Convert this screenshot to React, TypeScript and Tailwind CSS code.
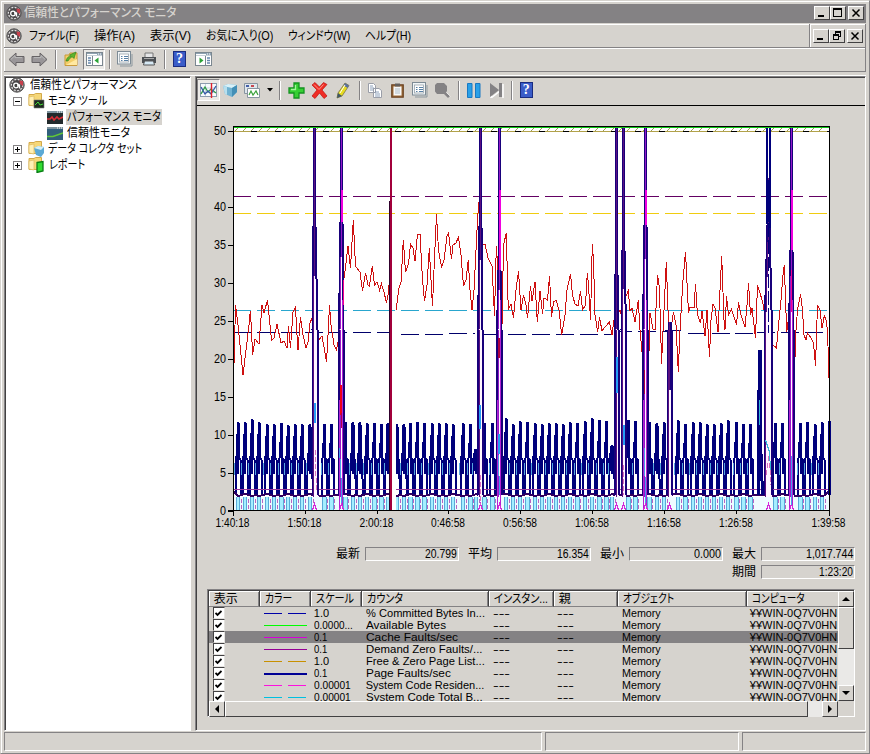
import React, { useLayoutEffect, useRef, useState } from 'react';

const FONT = "font-['Liberation_Sans','Noto_Sans_CJK_JP',sans-serif]";

type FitProps = { w: number; children: string; className?: string };

// Condenses a label to a given width
const Fit: React.FC<FitProps> = ({ w, children, className = '' }) => {
  const ref = useRef<HTMLSpanElement>(null);
  const [scale, setScale] = useState(1);

  useLayoutEffect(() => {
    if (ref.current) setScale(w / ref.current.offsetWidth);
  }, [w, children]);

  return (
    <span className={`block shrink-0 whitespace-pre ${className}`} style={{ width: w }}>
      <span
        ref={ref}
        className="inline-block origin-left [font-feature-settings:'palt']"
        style={{ transform: `scaleX(${scale})` }}
      >
        {children}
      </span>
    </span>
  );
};

const Gauge: React.FC = () => (
  <svg width="16" height="16" viewBox="0 0 16 16" className="shrink-0">
    <circle cx="8" cy="8" r="7.2" fill="#6b6769" stroke="#555" />
    <circle cx="8" cy="8" r="5.6" fill="#4a4749" stroke="#e4e4e4" strokeWidth="1.2" strokeDasharray="1.8 1.5" />
    <path d="M10.500 3.500l3.500.5v5l-3-2z" fill="#c8404c" />
    <circle cx="7" cy="8.500" r="2.300" fill="#444" stroke="#fff" strokeWidth="1.3" />
    <path d="M8 8h2.500v3.500" fill="none" stroke="#fff" strokeWidth="1.3" />
  </svg>
);

const Sep: React.FC = () => (
  <div className="h-[19px] w-[2px] shrink-0 border-l border-[#848284] bg-white" />
);

const Help: React.FC = () => (
  <div className="flex h-4 w-[13px] shrink-0 items-center justify-center border border-[#1a2c80] bg-[#3a5cc8] font-['Liberation_Serif',serif] text-[14px] font-bold leading-none text-white">
    ?
  </div>
);

const Arrow: React.FC<{ flip?: boolean }> = ({ flip }) => (
  <svg width="17" height="15" viewBox="0 0 17 15" className={flip ? '-scale-x-100' : ''}>
    <path d="M1 7.500L8 1v3.500h8v6H8V14z" fill="#999698" stroke="#666365" />
    <path d="M3 7.300l4-3.700v2h7" fill="none" stroke="#bbb" />
  </svg>
);

// Console window with its side pane on the left or on the right
const PanelIcon: React.FC<{ left?: boolean }> = ({ left }) => (
  <svg width="17" height="14" viewBox="0 0 17 14">
    <rect x=".5" y=".5" width="16" height="13" fill="#fff" stroke="#7b8790" />
    <rect x="1" y="1" width="15" height="2.5" fill="#8ea2b2" />
    <path d="M1 2.500h10M12 2h1M14 2h1" stroke="#fff" />
    <path d={left ? 'M6.500 4v9' : 'M10.500 4v9'} stroke="#7b8790" />
    <path d={left ? 'M2 6h3M2 8.500h3M2 11h3' : 'M12 6h3M12 8.500h3M12 11h3'} stroke="#6687ac" strokeWidth="1.3" />
    <path d={left ? 'M12.500 5.500v6L8.500 8.500z' : 'M4.500 5.500v6L8.500 8.500z'} fill="#2aa336" />
  </svg>
);

const PropsIcon: React.FC = () => (
  <svg width="16" height="16" viewBox="0 0 16 16">
    <rect x=".5" y=".5" width="13" height="12.500" fill="#f1f5f7" stroke="#7d8b95" />
    <path d="M3 15h12V3" fill="none" stroke="#8b979e" />
    <rect x="2.500" y="3" width="9" height="8" fill="#fff" stroke="#98a4ab" strokeWidth=".8" />
    <path d="M4 5.500h1.500M7 5.500h4M4 7.500h1.500M7 7.500h4M4 9.500h1.500M7 9.500h4" stroke="#5780a5" />
  </svg>
);

const Cube: React.FC = () => (
  <svg width="16" height="16" viewBox="0 0 16 16">
    <path d="M1 4l5-2 9 1v7l-5 5-7-3z" fill="#6fb2d2" />
    <path d="M1 4l5-2 9 1-5 3z" fill="#d9f1f8" />
    <path d="M10 6l5-3v7l-5 5z" fill="#438fb6" />
    <path d="M1 4l4 .8V13l-2-1z" fill="#b7dfee" />
  </svg>
);

const Toolbar: React.FC = () => (
  <div className="flex h-6 items-center border-b border-[#848284] pb-[1px]">
    <div className="ml-1 flex w-[40px] items-center justify-between">
      <Arrow />
      <Arrow flip />
    </div>
    <div className="ml-[7px] mr-[7px]"><Sep /></div>
    <svg width="15" height="16" viewBox="0 0 15 16">
      <path d="M1 4h4l1-2h7v12.500H1z" fill="#f4ce68" stroke="#c99a3b" />
      <path d="M2 14h11V8z" fill="#ffe9a2" />
      <path d="M2 10c1-4 3-5 5-4.500L5.500 4 12 1l-2 6.500-1.500-1.500c-2 0-3 2-4.500 4z" fill="#5fb52c" stroke="#237d1c" strokeWidth=".6" />
    </svg>
    <div className="ml-[4px] flex h-[21px] w-[22px] items-center justify-center border border-b-white border-l-[#848284] border-r-white border-t-[#848284] bg-[#ebe9e6]">
      <PanelIcon left />
    </div>
    <div className="ml-[4px] mr-[6px]"><Sep /></div>
    <PropsIcon />
    <svg width="16" height="14" viewBox="0 0 16 14" className="ml-[8px]">
      <path d="M4 1h8v5H4z" fill="#e5e6e7" stroke="#777" />
      <path d="M1 5h14v6H1z" fill="#4c5054" />
      <path d="M3 6.500h10" stroke="#aaa" />
      <path d="M3.500 9h9l1 4h-11z" fill="#d6e9f4" stroke="#555" />
    </svg>
    <div className="ml-[7px] mr-[7px]"><Sep /></div>
    <Help />
    <div className="ml-[9px]"><PanelIcon /></div>
  </div>
);

const MonitorToolbar: React.FC = () => (
  <div className="flex h-[28px] items-center border-b border-black pb-[3px]">
    <div className="flex h-[22px] w-[23px] items-center justify-center border border-b-white border-l-[#848284] border-r-white border-t-[#848284] bg-[#eceae7]">
      <svg width="17" height="15" viewBox="0 0 17 15">
        <rect x=".5" y=".5" width="16" height="13" fill="#f7fbfd" stroke="#8c9cae" />
        <path d="M1 5h15M1 9.500h15M5.500 1v12" stroke="#b7c4d3" strokeWidth=".7" />
        <path d="M1 11l4-7 3 5 3-3 5 4" fill="none" stroke="#2f9c46" strokeWidth="1.3" />
        <path d="M1 4l4 7 3-3 3 3 5-8" fill="none" stroke="#3558a8" strokeWidth="1.3" />
        <path d="M11.500 0v15" stroke="#e0202c" strokeWidth="1.4" />
      </svg>
    </div>
    <div className="ml-[2px]"><Cube /></div>
    <svg width="17" height="15" viewBox="0 0 17 15" className="ml-[6px]">
      <path d="M.5.5h13v10H.5z" fill="#dfe6ec" stroke="#8794a0" />
      <path d="M2 3h3" stroke="#4560a8" strokeWidth="2" />
      <path d="M7 3h3" stroke="#c84850" strokeWidth="2" />
      <path d="M3.500 5.500h12v9h-12z" fill="#fff" stroke="#8794a0" />
      <path d="M5 12l2-4 2 4 3-4 2 4" fill="none" stroke="#3aa13b" strokeWidth="1.2" />
    </svg>
    <svg width="6" height="4" viewBox="0 0 6 4" className="ml-[6px] mr-[6px]"><path d="M0 0h6L3 3.500z" /></svg>
    <div className="mr-[7px]"><Sep /></div>
    <svg width="17" height="17" viewBox="0 0 17 17">
      <path d="M6 1h5v5h5v5h-5v5H6v-5H1V6h5z" fill="#35d033" stroke="#149321" strokeWidth="1.300" />
      <path d="M7.500 3v4.500H3" fill="none" stroke="#a3f59c" strokeWidth="1.300" />
    </svg>
    <svg width="17" height="17" viewBox="0 0 17 17" className="ml-[6px]">
      <path d="M1 3l3-2.500L8.500 5l4-4.500L16 2.500 11 8l5 6-3 2.500L8.500 11 4 16.500 1 14l5-6z" fill="#f02d25" stroke="#ba1512" strokeWidth=".7" />
      <path d="M3 2.500l5 5 4.500-5" stroke="#ff958a" fill="none" />
    </svg>
    <svg width="14" height="17" viewBox="0 0 14 17" className="ml-[8px]">
      <path d="M1 16l1-5 7-10 4 2.500L6 14z" fill="#e8dc20" stroke="#7a7540" strokeWidth=".8" />
      <path d="M9 1l4 2.500-1.500 2.500-4-2.500z" fill="#5a6f9c" />
      <path d="M1 16l1-5 4 3z" fill="#3f5668" />
      <path d="M4 11l5-8" stroke="#fff" />
    </svg>
    <div className="ml-[9px] mr-[7px]"><Sep /></div>
    <svg width="14" height="15" viewBox="0 0 14 15">
      <path d="M.5.5h5l2 2v7h-7zM5.500 5.500h5.500l2.500 2v7h-8z" fill="#fff" stroke="#9a9ea8" />
      <path d="M2 3h3M2 5h4M2 7h3M7 9h4M7 11h5M7 13h5" stroke="#7088a8" strokeWidth=".8" />
    </svg>
    <svg width="13" height="15" viewBox="0 0 13 15" className="ml-[9px]">
      <path d="M.8 1.800h11.400v12.400H.8z" fill="#a2713d" stroke="#6b4322" strokeWidth="1.300" />
      <path d="M2.500 3.500h8v9h-8z" fill="#f6f7f8" />
      <path d="M4 .5h5v3H4z" fill="#625e5c" />
      <path d="M4 6h5M4 8h5M4 10h5" stroke="#aebdc6" />
    </svg>
    <div className="ml-[8px]"><PropsIcon /></div>
    <svg width="17" height="16" viewBox="0 0 17 16" className="ml-[6px]">
      <path d="M3 1h7l3 3v5l-1 1.500 4 3.500-2 2-4-4H3L1 9.500V3z" fill="#848284" />
      <path d="M12.500 10.500l4 4" stroke="#fff" strokeWidth=".6" />
    </svg>
    <div className="ml-[7px] mr-[6px]"><Sep /></div>
    <svg width="15" height="15" viewBox="0 0 15 15">
      <path d="M1.500.5H6v14H1.500zM9.500.5H14v14H9.500z" fill="#28a0e8" stroke="#1878c2" />
    </svg>
    <svg width="15" height="15" viewBox="0 0 15 15" className="ml-[8px]">
      <path d="M2 1v14l9-7M14 1v14" stroke="#fff" strokeWidth="1.500" fill="none" />
      <path d="M1 0v14l9-7zM10 0h3v14h-3z" fill="#848284" />
    </svg>
    <div className="ml-[7px] mr-[7px]"><Sep /></div>
    <Help />
  </div>
);

const WinButton: React.FC<{ kind: 'min' | 'max' | 'restore' | 'close' }> = ({ kind }) => (
  <div className="flex h-[14px] w-4 items-center justify-center border border-b-[#424142] border-l-white border-r-[#424142] border-t-white bg-[#d6d3ce]">
    <svg width="12" height="10" viewBox="0 0 12 10" fill="none" stroke="#000" shapeRendering="crispEdges">
      {kind === 'min' && <path d="M2 8h6" strokeWidth="2" />}
      {kind === 'max' && <path d="M1.500 1v7.500h8V1M1 1h9" strokeWidth="1.500" />}
      {kind === 'restore' && (
        <path d="M4 1h6M4.500 1v3M9.500 1v5M7 5.500h3M2 4h6M2.500 4v4.500h5V4" strokeWidth="1.300" />
      )}
      {kind === 'close' && <path d="M2.500 1.500l7 7M9.500 1.500l-7 7" strokeWidth="1.500" shapeRendering="auto" />}
    </svg>
  </div>
);

const Folder: React.FC<{ kind: 'tools' | 'sets' | 'reports' }> = ({ kind }) => (
  <svg width="17" height="16" viewBox="0 0 17 16">
    <path d="M1 1.500h5l1.500-1h6v12H1z" fill="#f5d778" stroke="#d3a94a" />
    <path d="M1 4l5-1v10l-5-1z" fill="#fff0b5" stroke="#dcb95f" strokeWidth=".7" />
    {kind === 'tools' && (
      <>
        <path d="M6 7h10v8H6z" fill="#1e2b20" stroke="#777" strokeWidth=".6" />
        <path d="M7 12l3-3 2 3 3-1" stroke="#48d838" fill="none" />
      </>
    )}
    {kind === 'sets' && (
      <>
        <path d="M6 7l4-2 6 1v6l-3 4-5-2z" fill="#5aa9d5" />
        <path d="M6 7l4-2 6 1-3 3z" fill="#d4eff8" />
      </>
    )}
    {kind === 'reports' && (
      <path d="M9 5.500l6-1v9.500l-6 1.500z" fill="#32dc32" stroke="#087d13" strokeWidth="1.300" />
    )}
  </svg>
);

const Monitor: React.FC<{ green?: boolean }> = ({ green }) => (
  <svg width="16" height="13" viewBox="0 0 16 13">
    <path d="M0 0h16v13H0z" fill={green ? '#315f7c' : '#222a2c'} />
    <path d="M0 0h16v2H0z" fill="#7d929c" />
    <path d="M10 1h1M12 1h1M14 1h1" stroke="#fff" />
    {green ? (
      <path d="M0 9.500h6l10-3.500" stroke="#61c837" strokeWidth="1.500" fill="none" />
    ) : (
      <path d="M0 8h3l2-2 2 3 3-3 2 2 4-2" stroke="#d92c34" strokeWidth="1.600" fill="none" />
    )}
  </svg>
);

const Toggle: React.FC<{ open?: boolean }> = ({ open }) => (
  <svg width="9" height="9" viewBox="0 0 9 9" shapeRendering="crispEdges">
    <path d="M.5.5h8v8h-8z" fill="#fff" stroke="#848284" />
    <path d={open ? 'M2 4.500h5' : 'M2 4.500h5M4.500 2v5'} stroke="#000" />
  </svg>
);

const Tree: React.FC = () => (
  <div className="w-[187px] border border-b-white border-l-[#848284] border-r-white border-t-[#848284]">
    <div className="h-full border-l border-t border-[#424142] bg-white pl-[3px] text-[12px] leading-4">
      <div className="-mt-[1px] flex h-4 items-center gap-[5px]">
        <Gauge />
        <Fit w={107}>信頼性とパフォーマンス</Fit>
      </div>
      <div className="flex h-4 items-center pl-1">
        <Toggle open />
        <span className="ml-[6px] mr-[3px]"><Folder kind="tools" /></span>
        <Fit w={59}>モニタ ツール</Fit>
      </div>
      <div className="flex h-4 items-center pl-[38px]">
        <Monitor />
        <div className="ml-[3px] bg-[#d6d3ce] pl-[1px] pr-[1px]"><Fit w={94}>パフォーマンス モニタ</Fit></div>
      </div>
      <div className="flex h-4 items-center pl-[38px]">
        <Monitor green />
        <Fit w={63} className="ml-[4px]">信頼性モニタ</Fit>
      </div>
      <div className="flex h-4 items-center pl-1">
        <Toggle />
        <span className="ml-[6px] mr-[3px]"><Folder kind="sets" /></span>
        <Fit w={94}>データ コレクタ セット</Fit>
      </div>
      <div className="flex h-4 items-center pl-1">
        <Toggle />
        <span className="ml-[6px] mr-[4px]"><Folder kind="reports" /></span>
        <Fit w={36}>レポート</Fit>
      </div>
    </div>
  </div>
);

const beforeGap =
  '233,385 234,364 235.5,305 238,325 240,345 243,375 246,350 249,325 250.3,311 251.5,330 252.6,355 255,339 259,344 262,305 264,313 267.5,300 270,325 271.5,340 274,338 277,324 281,343 284,341 287,348 288.5,326 290.5,348 293,312 295.5,307 297,335 298,350 300.5,317 303,335 306,348 308,342 310,323 312,318 315,335 318,344 319,340 322,336 324.500,350 326.500,362 328,335 329.5,305 331,325 334,345 336.500,350 338,342 340,385 341,395 342,330 343.300,284 346,263 348,246 350.500,268 353.300,220 355.500,266 360,272 362.500,291 365.500,273 368,285 369.500,286 372.300,266 374.500,285 377,282 379.500,290 381.500,284 384,292 386.500,303 388,295 390,276';

const afterGap =
  '396,310 399,288 401,282 403.3,240 405.5,272 408.5,264 410.5,244 413,248 415,261 417.5,234 420,234 422.5,280 424.5,301 427,285 429.3,248 431,280 432.5,306 434,270 436.5,214 438.5,250 441.5,267 444,260 447,236 448.5,233 451.5,259 453,245 456,243 458.5,237 461,255 463.5,286 466,280 468.3,260 470,290 472,310 474,290 477,230 478.7,202 480.5,240 483,244 485,244 488,258 492,266 494.5,316 496.3,246 498,270 502,325 503.5,245 506.3,233 508,300 508.5,309 511,304 513.5,318 516,290 518.5,271 521,310 523.5,295 526,305 527.5,318 530.5,286 532,301 535,282 537.3,322 540,291 542.5,314 544,298 547.5,300 549.5,276 551.5,317 553.5,302 556,300 559,310 561.7,335 565,315 567,290 570.5,274 572.5,295 575,304 578,306 580.5,291 582.5,310 585.5,305 587.3,273 588.5,285 590.5,320 592.3,244 593.5,260 595,315 597.7,332 599.5,317 602,331 605,327 609.5,322 612,335 614,320 620,310 622,318 624,312 625.5,297 628.3,291 630,311 632,308 635,322 638.3,300 640,330 641.5,346 643.5,370 645,395 648,390 650,313 653,329 655,330 657.5,275 659,285 660.5,320 661.5,364 664,310 666.3,262 668,310 670,335 673.5,312 676,325 678.3,372 680,330 683,280 685.5,252 688.5,313 690,307 694,308 695.5,284 697.5,315 700.5,323 702,311 705,336 707,310 709.5,357 711,320 713,304 715,308 718,332 719.5,300 721.7,256 724,320 725,330 726.5,296 728.5,315 731.5,309 736.5,325 738.5,302 741,315 745,327 747,305 748.5,283 750.5,315 752,308 755.5,338 757.5,285 762.7,302 764,310 767,330 770,310 773,345 776.5,348 779,320 781,300 783,275 784.3,265 786.7,332 788.5,318 790,300 793,310 794.3,377 796,330 797.5,310 800.5,294 802.5,310 804,335 806,340 807.5,333 811,338 813.5,343 815.5,366 817.5,305 820,310 822,328 824.5,315 826,320 827.500,330 829,378';

// x position and top of each short page-fault burst
const bursts: [number, number][] = [
  [238.3, 423], [245.3, 423], [252.3, 420], [259.3, 423], [267.3, 425], [274.3, 425], [281.5, 424],
  [288.3, 426], [295.3, 425], [302.3, 425], [310, 425], [324.5, 425], [331.5, 425], [345.5, 423],
  [353, 423], [360, 423], [367.3, 424], [374.5, 424], [381.5, 425], [388, 424], [397, 425],
  [404, 425], [410.5, 424], [417.5, 423], [424.5, 424], [432.3, 424], [439.3, 424], [446.3, 424],
  [453.3, 425], [463.3, 424], [470.5, 425], [476, 450], [484.5, 424], [492.5, 424], [506.3, 419], [513.3, 425],
  [520.3, 422], [527.5, 423], [535.3, 424], [542.3, 425], [549.3, 424], [556.3, 424], [563.3, 425],
  [570.3, 423], [577.5, 424], [585.3, 422], [592.3, 419], [599.5, 421], [606.5, 422], [612, 446], [628.5, 421],
  [635.5, 422], [649.5, 423], [657, 424], [664.3, 423], [678.3, 421], [685.5, 425], [693.3, 423],
  [700.3, 423], [707.3, 425], [714.3, 425], [721.3, 424], [728.3, 421], [736.5, 423], [743.5, 425],
  [750.5, 425], [775.5, 424], [782.5, 424], [800.5, 424], [807.5, 423], [815.3, 425], [822.3, 423],
];

// [left foot, centre, right foot, y where the sides widen, top, magenta]
const spikes: [number, number, number, number, number, boolean][] = [
  [312.5, 314.5, 317.5, 226, 128, false],
  [339, 341.5, 343.5, 222, 128, true],
  [478, 480.5, 482.5, 226, 128, false],
  [497, 499.5, 501.5, 270, 128, true],
  [615, 616.5, 618.5, 274, 128, false],
  [621.5, 623.5, 626, 250, 128, false],
  [643, 645.5, 647.5, 225, 128, true],
  [667.5, 669.5, 671.5, 390, 322, false],
  [764.5, 768.5, 772, 225, 128, false],
  [789, 791.5, 793.5, 250, 128, true],
];

const yTicks = [50, 45, 40, 35, 30, 25, 20, 15, 10, 5, 0];
const xTicks: [number, string][] = [
  [233, '1:40:18'], [305, '1:50:18'], [377, '2:00:18'], [448.5, '0:46:58'], [520.5, '0:56:58'],
  [592.5, '1:06:58'], [664.5, '1:16:58'], [736.5, '1:26:58'], [829, '1:39:58'],
];

const Chart: React.FC = () => (
  <svg width="656" height="427" viewBox="208 106 656 427" fill="none" className="ml-[11px] block shrink-0">
    <g shapeRendering="crispEdges">
      <path d="M233 126h597v384H233z" fill="#fff" />
      <path d="M233 131.500h597" stroke="#000" />
      <path d="M233 131.500h597" stroke="#b2a24a" strokeDasharray="18 6" />
      {Array.from({ length: 74 }, (_, i) => (
        <path key={i} d={`M${235 + i * 8} 131l4-4`} stroke="#9a9a5c" />
      ))}
      <path d="M234 497h595v13H234z" fill="#eefbff" />
      {bursts.map(([x]) => (
        <g key={x}>
          <path d={`M${x - 2} 497h4v13h-4z`} fill="#a5efff" />
          <path d={`M${x - 2} 510v-13M${x + 1.5} 497v13`} stroke="#5aaad8" />
          <path d={`M${x + 3} 499v11`} stroke="#b765c4" strokeDasharray="4 2" />
        </g>
      ))}
      {bursts.map(([x, y]) => (
        <g key={x}>
          <polyline
            points={`${x - 2.7},495 ${x - 2.4},462 ${x - 1.2},450 ${x - 0.5},${y} ${x + 0.5},${y} ${x + 1},458 ${x + 2.3},460 ${x + 2.7},495`}
            stroke="#00007b"
            strokeWidth="2"
            strokeLinejoin="bevel"
          />
          <path d={`M${x} ${y}V474`} stroke="#00007b" strokeWidth="2" />
          <path d={`M${x - 3.500} 463v12`} stroke="#55a6e0" />
        </g>
      ))}
      <path d="M233 489.500h596" stroke="#9d3c9c" />
      <polyline
        points={`234,492 ${bursts.map(([x], i) => `${x},${i % 3 === 1 ? 494 : 496} ${x + 3},495`).join(' ')} 829,491`}
        stroke="#31005f"
        strokeWidth="2"
      />
      <path d="M392 132h4v378h-4z" fill="#fff" />
      <path d="M233 196.500h596" stroke="#630063" strokeDasharray="18 6" />
      <path d="M233 213.500h596" stroke="#f0cc10" strokeDasharray="18 6" />
      <path d="M233 310.500h596" stroke="#29a6ce" strokeDasharray="18 6" />
      <path d="M233 332.500h158" stroke="#00006b" strokeDasharray="18 6" />
      <path d="M401 334.500h48M449 333.500h26M484 334.500h128" stroke="#00006b" strokeDasharray="18 6" />
      <path d="M614 331.500h56M665 330.500h16M688 333.500h43M735 333.500h18M757 332.500h72" stroke="#00006b" strokeDasharray="18 6" />
      <polyline points={beforeGap} stroke="#ce1010" />
      <polyline points={afterGap} stroke="#ce1010" />
      {spikes.map(([l, c, r, wide, top, magenta]) => (
        <g key={c}>
          <path d={`M${l} 497V330L${c - 1} ${wide}h2L${r} 330V497z`} fill="#fff6ff" />
          <path d={`M${l} 495V330L${c - 1} ${wide}V${top}M${r} 495V330L${c + 1} ${wide}V${top}`} stroke="#18007b" strokeWidth="2" />
          <path d={`M${l + 1} 497V330L${c} ${wide}V${top}`} stroke={magenta ? '#9418c8' : '#5b1080'} />
          {magenta && <path d={`M${c} 190V${wide}`} stroke="#f000df" strokeWidth="2" />}
          {magenta && <path d={`M${r - 1} 300V508M${l} 400V508`} stroke="#b321d2" />}
          <path d={`M${c - 2} 510l2-6 2 6`} stroke="#d528d8" />
        </g>
      ))}
      <path d="M314.500 403v20M616.500 357v36M623.500 425v20M480 405v24M498.500 434v20" stroke="#259df5" strokeWidth="2" />
      <path d="M340.500 385v30" stroke="#ef0018" strokeWidth="2" />
      <path d="M341.500 413v15" stroke="#b0004a" />
      <path d="M339.500 448l1.500 30 1 25M498.500 455l1 40M644.500 448l1 55M791 455l1 50" stroke="#489cea" />
      <path d="M315 450l1.500 40M480 475v30M623 465v30M766 475l3-20 2 30" stroke="#db70bd" strokeDasharray="5 2" />
      <path d="M343.500 280v25M791.500 270v42" stroke="#f60090" strokeWidth="1.500" />
      <path d="M499 338v20M644.500 370v24" stroke="#b00040" strokeWidth="1.500" />
      <path d="M758 495V430L760 350V425L762.500 495" stroke="#00007b" strokeWidth="3" />
      <path d="M759 400v25M765.500 440l4 12 1 18" stroke="#35b9d6" />
      <path d="M767 128v96M770 128v100" stroke="#00007b" strokeWidth="2" />
      <path d="M768.500 128v50" stroke="#fff" />
      <path d="M768.500 180v42" stroke="#00007b" strokeWidth="4" />
      <path d="M768.500 223v110" stroke="#00007b" strokeDasharray="14 3" />
      <path d="M829 421v74" stroke="#00007b" strokeWidth="3" />
      <path d="M389.500 510V275l1-143" stroke="#31002c" />
      <path d="M391 128v382" stroke="#a2003b" strokeWidth="2" />
      <path d="M233 126.500h597" stroke="#000" />
      <path d="M233 127.500h597" stroke="#10c818" />
      <path d="M233.500 126v390M829.500 126v390M228 510.500h602" stroke="#000" />
      {yTicks.map((v) => (
        <path key={v} d={`M228 ${511.5 - Math.round(v * 7.6)}h5`} stroke="#000" />
      ))}
      {xTicks.map(([x]) => (
        <path key={x} d={`M${Math.floor(x) + 0.5} 510v4`} stroke="#000" />
      ))}
    </g>
    <g fill="#000" fontSize="12">
      {yTicks.map((v) => (
        <text key={v} x="226" y={515 - v * 7.6} textAnchor="end" textLength={v > 5 ? 12 : 6} lengthAdjust="spacingAndGlyphs">
          {v}
        </text>
      ))}
      {xTicks.map(([x, label]) => (
        <text key={x} x={x - 17.5} y="527" textLength="34" lengthAdjust="spacingAndGlyphs">
          {label}
        </text>
      ))}
    </g>
  </svg>
);

type StatProps = { label: string; value: string; w: number; vw: number };

const Stat: React.FC<StatProps> = ({ label, value, w, vw }) => (
  <div className="flex h-[14px] items-center gap-[5px]">
    <Fit w={24}>{label}</Fit>
    <div
      className="flex h-[14px] items-center justify-end border border-b-white border-l-[#848284] border-r-white border-t-[#848284] pr-[1px]"
      style={{ width: w }}
    >
      <Fit w={vw}>{value}</Fit>
    </div>
  </div>
);

type Row = { color: string; dash?: boolean; thick?: boolean; scale: string; sw: number; name: string; nw: number };

const rows: Row[] = [
  { color: '#0000a8', dash: true, scale: '1.0', sw: 15, name: '% Committed Bytes In...', nw: 119 },
  { color: '#00ff00', scale: '0.0000...', sw: 39, name: 'Available Bytes', nw: 80 },
  { color: '#d800d8', scale: '0.1', sw: 13, name: 'Cache Faults/sec', nw: 92 },
  { color: '#940094', scale: '0.1', sw: 13, name: 'Demand Zero Faults/...', nw: 117 },
  { color: '#c89000', dash: true, scale: '1.0', sw: 15, name: 'Free & Zero Page List...', nw: 119 },
  { color: '#000094', thick: true, scale: '0.1', sw: 13, name: 'Page Faults/sec', nw: 85 },
  { color: '#ff10e0', dash: true, scale: '0.00001', sw: 37, name: 'System Code Residen...', nw: 119 },
  { color: '#00c0e0', dash: true, scale: '0.00001', sw: 37, name: 'System Code Total B...', nw: 117 },
];

const HeadCell: React.FC<{ label: string; w: number; cls: string }> = ({ label, w, cls }) => (
  <div className={`flex h-full shrink-0 items-center overflow-hidden border-b border-r border-b-[#848284] border-r-[#424142] pl-[5px] shadow-[inset_1px_1px_0_#fff,inset_-1px_0_0_#848284] ${cls}`}>
    <Fit w={w}>{label}</Fit>
  </div>
);

const ScrollButton: React.FC<{ d: string }> = ({ d }) => (
  <div className="flex h-4 w-4 shrink-0 items-center justify-center border border-b-[#424142] border-l-white border-r-[#424142] border-t-white bg-[#d6d3ce]">
    <svg width="8" height="8" viewBox="0 0 8 8"><path d={d} /></svg>
  </div>
);

const CounterTable: React.FC = () => (
  <div className="ml-[10px] mt-[10px] h-[128px] w-[648px] border border-b-white border-l-[#848284] border-r-white border-t-[#848284]">
    <div className="h-full border-l border-t border-[#424142]">
      <div className="flex h-[110px]">
        <div className="w-[629px] overflow-hidden">
          <div className="flex h-[16px] leading-[14px]">
            <HeadCell label="表示" w={24} cls="w-[51px]" />
            <HeadCell label="カラー" w={27} cls="w-[51px]" />
            <HeadCell label="スケール" w={38} cls="w-[51px]" />
            <HeadCell label="カウンタ" w={36} cls="w-[127px]" />
            <HeadCell label="インスタン..." w={54} cls="w-[65px]" />
            <HeadCell label="親" w={12} cls="w-[64px]" />
            <HeadCell label="オブジェクト" w={51} cls="w-[129px]" />
            <HeadCell label="コンピュータ" w={53} cls="w-[110px]" />
          </div>
          {rows.map((row, i) => (
            <div key={row.name} className={`flex h-3 items-center text-[11px] leading-[12px] ${i === 2 ? 'bg-[#848284]' : ''}`}>
              <div className="flex h-full w-[51px] shrink-0 pl-1">
                <div className="flex h-3 w-3 items-center justify-center border border-b-[#e4e2df] border-l-[#424142] border-r-[#e4e2df] border-t-[#424142] bg-white">
                  <svg width="7" height="7" viewBox="0 0 7 7"><path d="M.5 3l2 2L6.500 1" fill="none" stroke="#000" strokeWidth="1.800" /></svg>
                </div>
              </div>
              <svg width="51" height="12" viewBox="0 0 51 12" className="shrink-0" shapeRendering="crispEdges">
                <path d="M4 6.500h43" stroke={row.color} strokeWidth={row.thick ? 2 : 1} strokeDasharray={row.dash ? '18 6' : undefined} />
              </svg>
              <div className="w-[51px] shrink-0 pl-[3px]"><Fit w={row.sw}>{row.scale}</Fit></div>
              <div className="w-[127px] shrink-0 pl-[4px]"><Fit w={row.nw}>{row.name}</Fit></div>
              <div className="w-[65px] shrink-0 pl-[4px]"><Fit w={17}>---</Fit></div>
              <div className="w-[64px] shrink-0 pl-[3px]"><Fit w={17}>---</Fit></div>
              <div className="w-[129px] shrink-0 pl-[4px]"><Fit w={39}>Memory</Fit></div>
              <div className="shrink-0 pl-[3px]"><Fit w={87}>¥¥WIN-0Q7V0HN</Fit></div>
            </div>
          ))}
        </div>
        <div className="flex w-4 flex-col bg-[#eae9e7]">
          <ScrollButton d="M4 2l4 4H0z" />
          <div className="h-[42px] border border-b-[#424142] border-l-white border-r-[#424142] border-t-white bg-[#d6d3ce]" />
          <div className="flex-1" />
          <ScrollButton d="M4 6l4-4H0z" />
        </div>
      </div>
      <div className="flex h-4 w-[629px] bg-[#eae9e7]">
        <ScrollButton d="M2 4l4-4v8z" />
        <div className="w-[583px] border border-b-[#424142] border-l-white border-r-[#424142] border-t-white bg-[#d6d3ce]" />
        <div className="flex-1" />
        <ScrollButton d="M6 4L2 0v8z" />
      </div>
    </div>
  </div>
);

const MonitorPane: React.FC = () => (
  <div className="ml-[4px] flex w-[672px] flex-col border border-b-white border-l-[#848284] border-r-white border-t-[#848284]">
    <div className="flex flex-1 flex-col border-l border-t border-[#424142]">
      <MonitorToolbar />
      <Chart />
      <div className="mt-[14px] flex flex-col items-end gap-[4px] pr-[10px] text-[12px] leading-[14px]">
        <div className="flex gap-[9px]">
          <Stat label="最新" value="20.799" w={94} vw={32} />
          <Stat label="平均" value="16.354" w={94} vw={32} />
          <Stat label="最小" value="0.000" w={94} vw={27} />
          <Stat label="最大" value="1,017.744" w={94} vw={47} />
        </div>
        <Stat label="期間" value="1:23:20" w={94} vw={34} />
      </div>
      <CounterTable />
    </div>
  </div>
);

const menu: [string, number][] = [
  ['ファイル(F)', 50], ['操作(A)', 41], ['表示(V)', 41], ['お気に入り(O)', 67], ['ウィンドウ(W)', 62], ['ヘルプ(H)', 46],
];

const App: React.FC = () => {
  return (
    <div className={`flex h-[754px] w-[870px] flex-col overflow-hidden border border-b-[#848284] border-l-[#d6d3ce] border-r-[#848284] border-t-[#d6d3ce] bg-[#d6d3ce] pl-[3px] pr-[3px] pt-[2px] text-[12px] text-black shadow-[inset_1px_1px_0_#fff] ${FONT}`}>
      <div className="mt-[1px] flex h-[19px] shrink-0 items-center bg-[#848284] pb-[1px] pl-[2px] pr-[2px] text-[#d6d3ce]">
        <Gauge />
        <Fit w={152} className="ml-[2px] font-medium">信頼性とパフォーマンス モニタ</Fit>
        <div className="ml-auto flex">
          <WinButton kind="min" />
          <WinButton kind="max" />
          <div className="ml-[2px]"><WinButton kind="close" /></div>
        </div>
      </div>
      <div className="mt-[1px] flex h-[24px] shrink-0 border-b border-r border-[#848284] shadow-[inset_1px_1px_0_#fff]">
        <div className="flex flex-1 items-center border-r border-[#848284] pl-[2px]">
          <Gauge />
          <div className="ml-[7px] flex gap-[15px]">
            {menu.map(([label, w]) => (
              <Fit key={label} w={w}>{label}</Fit>
            ))}
          </div>
        </div>
        <div className="flex items-center border-l border-white pl-[2px] pr-[2px]">
          <WinButton kind="min" />
          <WinButton kind="restore" />
          <div className="ml-[2px]"><WinButton kind="close" /></div>
        </div>
      </div>
      <div className="h-6 shrink-0 border-r border-[#848284] shadow-[inset_1px_1px_0_#fff]">
        <Toolbar />
      </div>
      <div className="mt-[3px] flex h-[656px] shrink-0 border-t border-white">
        <Tree />
        <MonitorPane />
      </div>
      <div className="mt-[1px] flex h-[19px] shrink-0 gap-[3px]">
        <div className="w-[538px] border border-b-white border-l-[#848284] border-r-white border-t-[#848284]" />
        <div className="w-[194px] border border-b-white border-l-[#848284] border-r-white border-t-[#848284]" />
        <div className="flex-1 border border-b-white border-l-[#848284] border-r-white border-t-[#848284]" />
      </div>
    </div>
  );
};

export default App;
